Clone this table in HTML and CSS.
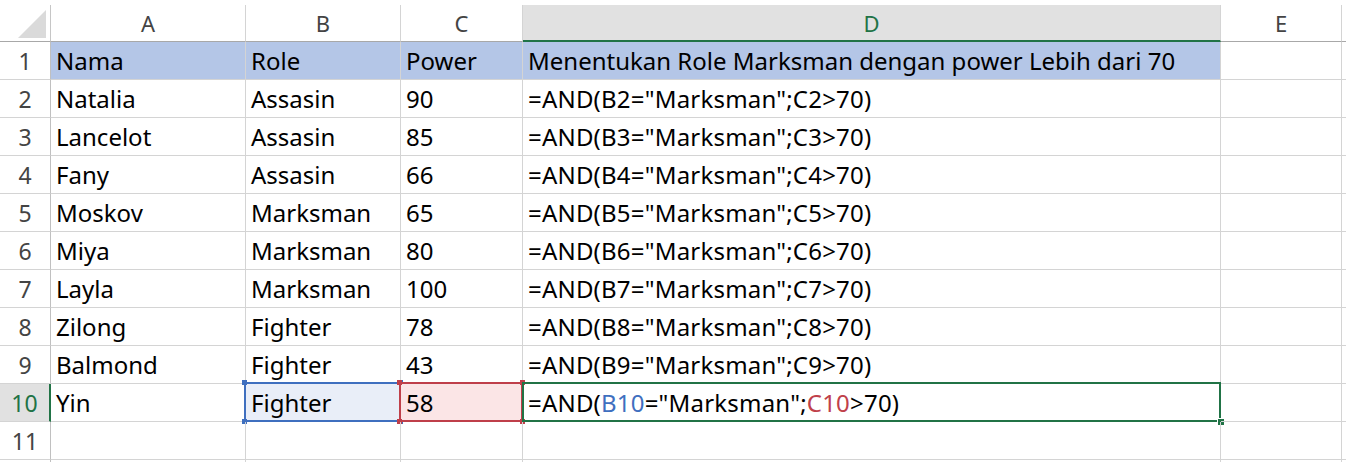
FILE: index.html
```html
<!DOCTYPE html>
<html>
<head>
<meta charset="utf-8">
<link rel="stylesheet" href="styles.css">
</head>
<body>
<div class="sheet">
  <div class="corner"><span class="tri"></span></div>
  <div class="colhead">A</div>
  <div class="colhead">B</div>
  <div class="colhead">C</div>
  <div class="colhead sel">D</div>
  <div class="colhead">E</div>
  <div class="colhead"></div>

  <div class="rowhead">1</div>
  <div class="cell title">Nama</div>
  <div class="cell title">Role</div>
  <div class="cell title">Power</div>
  <div class="cell title">Menentukan Role Marksman dengan power Lebih dari 70</div>
  <div class="cell"></div>
  <div class="cell"></div>

  <div class="rowhead">2</div>
  <div class="cell">Natalia</div>
  <div class="cell">Assasin</div>
  <div class="cell">90</div>
  <div class="cell formula">=AND(B2="Marksman";C2&gt;70)</div>
  <div class="cell"></div>
  <div class="cell"></div>

  <div class="rowhead">3</div>
  <div class="cell">Lancelot</div>
  <div class="cell">Assasin</div>
  <div class="cell">85</div>
  <div class="cell formula">=AND(B3="Marksman";C3&gt;70)</div>
  <div class="cell"></div>
  <div class="cell"></div>

  <div class="rowhead">4</div>
  <div class="cell">Fany</div>
  <div class="cell">Assasin</div>
  <div class="cell">66</div>
  <div class="cell formula">=AND(B4="Marksman";C4&gt;70)</div>
  <div class="cell"></div>
  <div class="cell"></div>

  <div class="rowhead">5</div>
  <div class="cell">Moskov</div>
  <div class="cell">Marksman</div>
  <div class="cell">65</div>
  <div class="cell formula">=AND(B5="Marksman";C5&gt;70)</div>
  <div class="cell"></div>
  <div class="cell"></div>

  <div class="rowhead">6</div>
  <div class="cell">Miya</div>
  <div class="cell">Marksman</div>
  <div class="cell">80</div>
  <div class="cell formula">=AND(B6="Marksman";C6&gt;70)</div>
  <div class="cell"></div>
  <div class="cell"></div>

  <div class="rowhead">7</div>
  <div class="cell">Layla</div>
  <div class="cell">Marksman</div>
  <div class="cell">100</div>
  <div class="cell formula">=AND(B7="Marksman";C7&gt;70)</div>
  <div class="cell"></div>
  <div class="cell"></div>

  <div class="rowhead">8</div>
  <div class="cell">Zilong</div>
  <div class="cell">Fighter</div>
  <div class="cell">78</div>
  <div class="cell formula">=AND(B8="Marksman";C8&gt;70)</div>
  <div class="cell"></div>
  <div class="cell"></div>

  <div class="rowhead">9</div>
  <div class="cell">Balmond</div>
  <div class="cell">Fighter</div>
  <div class="cell">43</div>
  <div class="cell formula">=AND(B9="Marksman";C9&gt;70)</div>
  <div class="cell"></div>
  <div class="cell"></div>

  <div class="rowhead sel">10</div>
  <div class="cell">Yin</div>
  <div class="cell ref-b">Fighter<span class="box box-blue"><i class="h tl"></i><i class="h tr"></i><i class="h bl"></i><i class="h br"></i></span></div>
  <div class="cell ref-c">58<span class="box box-red"><i class="h tl"></i><i class="h tr"></i><i class="h bl"></i><i class="h br"></i></span></div>
  <div class="cell formula">=AND(<span class="t-blue">B10</span>="Marksman";<span class="t-red">C10</span>&gt;70)<span class="box box-green"><i class="fill"></i></span></div>
  <div class="cell"></div>
  <div class="cell"></div>

  <div class="rowhead">11</div>
  <div class="cell"></div>
  <div class="cell"></div>
  <div class="cell"></div>
  <div class="cell"></div>
  <div class="cell"></div>
  <div class="cell"></div>

  <div class="rowhead"></div>
  <div class="cell"></div>
  <div class="cell"></div>
  <div class="cell"></div>
  <div class="cell"></div>
  <div class="cell"></div>
  <div class="cell"></div>
</div>
</body>
</html>
```

FILE: styles.css
```css
html, body {
  margin: 0;
  padding: 0;
  background: #ffffff;
  overflow: hidden;
}

.sheet {
  padding-top: 5px;
  display: grid;
  grid-template-columns: 51px 195px 155px 122px 698px 121px 1fr;
  grid-template-rows: 37px;
  grid-auto-rows: 38px;
  font-family: "Noto Sans", "Open Sans", sans-serif;
  font-size: 24px;
  color: #000000;
}

.corner {
  position: relative;
  border-right: 1px solid #c6c6c6;
  border-bottom: 1px solid #a8a8a8;
  box-sizing: border-box;
}

.tri {
  position: absolute;
  right: 4px;
  bottom: 3px;
  width: 28px;
  height: 28px;
  background: #dadada;
  clip-path: polygon(100% 0, 100% 100%, 0 100%);
}

.colhead {
  box-sizing: border-box;
  border-right: 1px solid #d4d4d4;
  border-bottom: 1px solid #a8a8a8;
  display: flex;
  align-items: center;
  justify-content: center;
  color: #444444;
  font-size: 22px;
}

.colhead.sel {
  background: #e1e1e1;
  border-bottom: 2px solid #217346;
  color: #217346;
}

.rowhead {
  box-sizing: border-box;
  border-right: 1px solid #c0c0c0;
  border-bottom: 1px solid #d4d4d4;
  display: flex;
  align-items: center;
  justify-content: center;
  color: #444444;
  font-size: 23px;
}

.rowhead.sel {
  background: #e1e1e1;
  color: #217346;
  border-right: 2px solid #217346;
}

.cell {
  position: relative;
  box-sizing: border-box;
  border-right: 1px solid #d4d4d4;
  border-bottom: 1px solid #d4d4d4;
  display: flex;
  align-items: center;
  padding-left: 5px;
  white-space: nowrap;
}

.cell.formula {
  letter-spacing: 0.2px;
}

.cell.title {
  background: #b4c6e7;
}

.ref-b {
  background: #e9eef8;
}

.ref-c {
  background: #fbe5e6;
}

.t-blue { color: #3f6fbf; }
.t-red { color: #c0404a; }

.box {
  position: absolute;
  left: -2px;
  top: -2px;
  right: -1px;
  bottom: -1px;
  border: 2px solid;
  pointer-events: none;
}

.box-blue { border-color: #3f6fbf; }
.box-red { border-color: #bf3f4a; }
.box-green {
  border-color: #217346;
  left: -1px;
  right: -1px;
}

.h {
  position: absolute;
  width: 5px;
  height: 5px;
}

.box-blue .h { background: #3f6fbf; }
.box-red .h { background: #bf3f4a; }

.tl { left: -4px; top: -4px; }
.tr { right: -4px; top: -4px; }
.bl { left: -4px; bottom: -4px; }
.br { right: -4px; bottom: -4px; }

.fill {
  position: absolute;
  right: -5px;
  bottom: -5px;
  width: 6px;
  height: 6px;
  background: #217346;
  border-left: 1px solid #ffffff;
  border-top: 1px solid #ffffff;
}
```
